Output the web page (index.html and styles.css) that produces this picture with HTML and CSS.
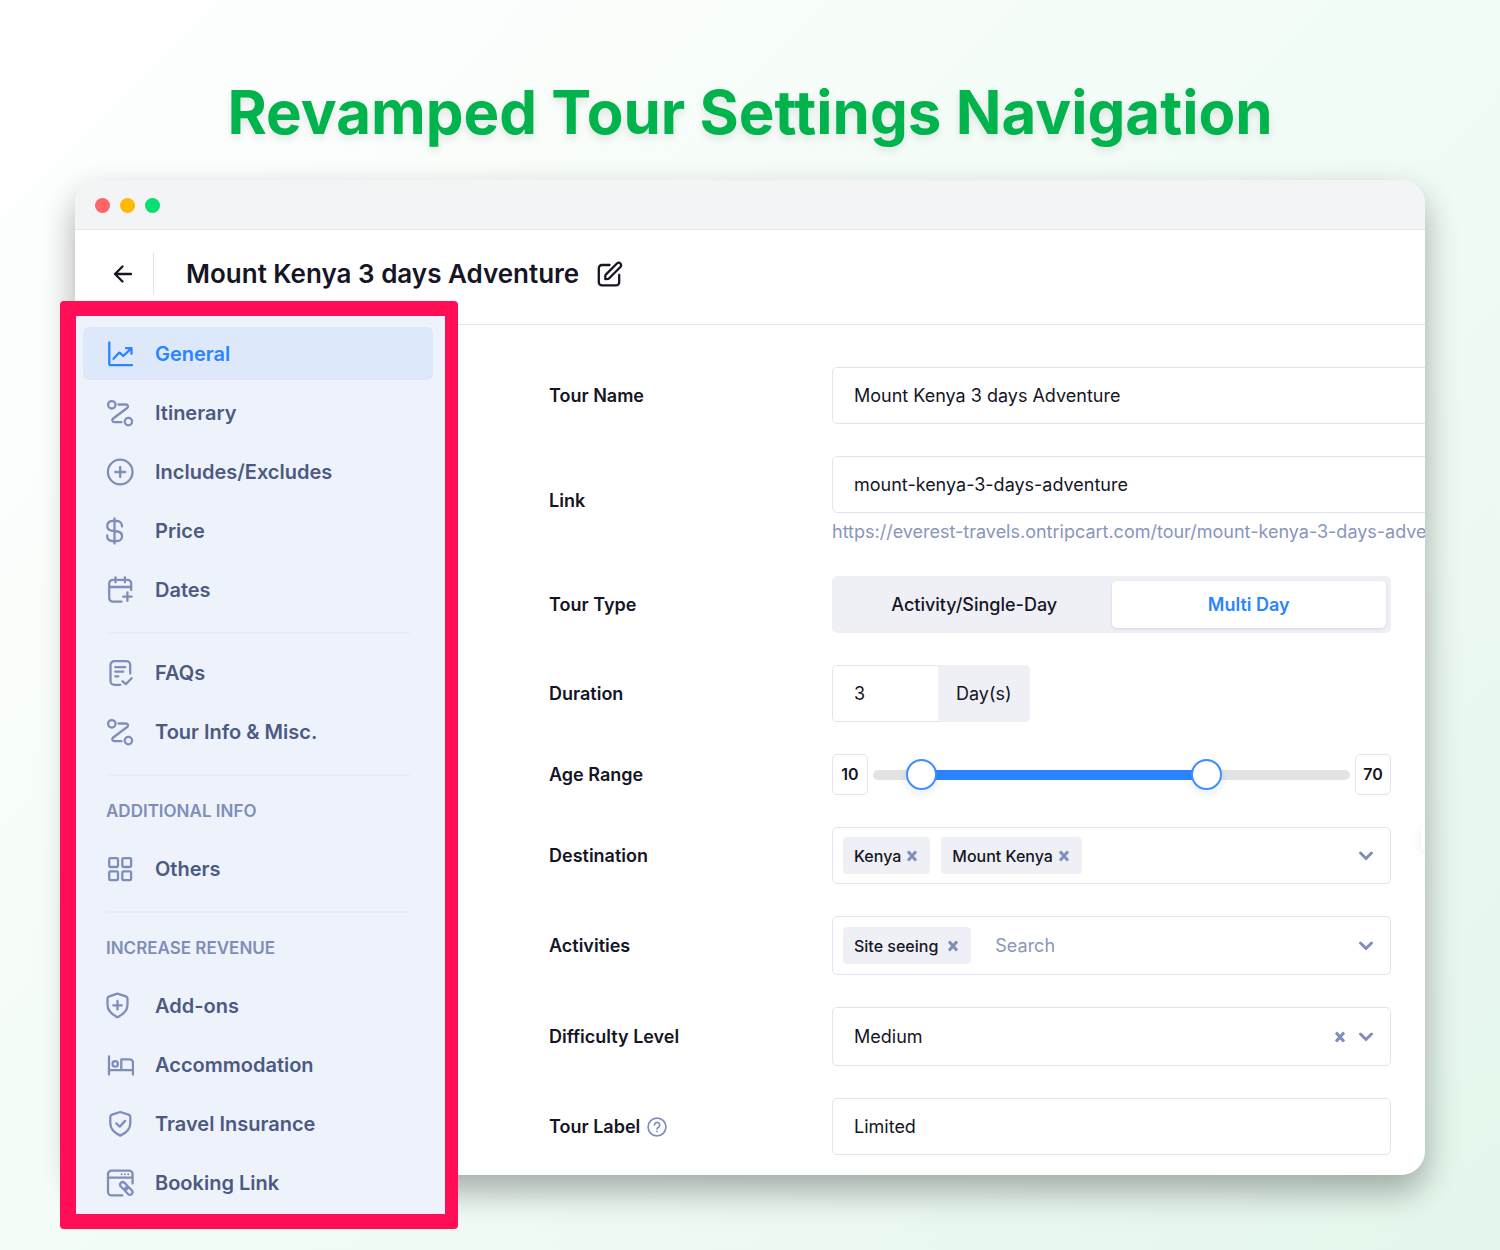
FILE: index.html
```html
<!DOCTYPE html>
<html lang="en">
<head>
<meta charset="utf-8">
<meta name="viewport" content="width=device-width, initial-scale=1">
<title>Revamped Tour Settings Navigation</title>
<link rel="stylesheet" href="styles.css">
</head>
<body>
<main class="page">
  <h1 class="headline">Revamped Tour Settings Navigation</h1>

  <section class="window">
    <div class="titlebar">
      <span class="dot dot-red"></span>
      <span class="dot dot-yellow"></span>
      <span class="dot dot-green"></span>
    </div>

    <header class="tour-header">
      <button class="back" type="button" aria-label="Back">
        <svg class="icon" viewBox="0 0 28 28"><path d="M22 14H6.500M13.500 6.500L6 14l7.500 7.500"/></svg>
      </button>
      <h2 class="tour-title">Mount Kenya 3 days Adventure</h2>
      <button class="edit" type="button" aria-label="Edit name">
        <svg class="icon" viewBox="0 0 28 28"><path d="M13.500 5H6a3.200 3.200 0 0 0-3.200 3.200v14A3.200 3.200 0 0 0 6 25.400h14a3.200 3.200 0 0 0 3.200-3.200V15"/><path d="M9.300 19.100v-3.400a1.500 1.500 0 0 1 .5-1.100L20.900 3.500a2.400 2.400 0 0 1 3.500 3.500L13.200 18.300a2 2 0 0 1-1.200.6z"/></svg>
      </button>
    </header>

    <div class="body">
      <nav class="sidebar" aria-label="Tour settings">
        <ul class="menu">
          <li><a class="item active" href="#general" aria-current="page"><svg class="icon" viewBox="0 0 28 28"><path d="M3.300 2.500v21.300a1.400 1.400 0 0 0 1.400 1.400H26"/><path d="M7.500 18.800l5.300-5.900a.8.800 0 0 1 1.100 0l2.800 2.600a.8.800 0 0 0 1.100 0L25 8.600M20 8.200h5.500v5.600"/></svg>General</a></li>
          <li><a class="item" href="#itinerary"><svg class="icon" viewBox="0 0 28 28"><circle cx="5.800" cy="5.800" r="3.700"/><circle cx="22.400" cy="22.600" r="3.700"/><path d="M12.500 5.500h7.300c2.200 0 3 2.200 1.400 3.500L7.200 19.500c-1.800 1.400-.8 3.700 1.300 3.700h7"/></svg>Itinerary</a></li>
          <li><a class="item" href="#includes"><svg class="icon" viewBox="0 0 28 28"><circle cx="14.200" cy="14" r="12.300"/><path d="M14.200 9v10M9.200 14h10"/></svg>Includes/Excludes</a></li>
          <li><a class="item" href="#price"><svg class="icon" viewBox="0 0 28 28"><path d="M8.500 1.500v25M16 9.500V9a5 5 0 0 0-5-5H6a4.800 4.800 0 0 0-4.800 4.800C1.200 11.500 3 13.300 5.500 13.600l6.200.9c2.600.4 4.300 2.200 4.300 4.700A4.800 4.800 0 0 1 11.200 24H6a4.800 4.800 0 0 1-4.800-4.800v-.7"/></svg>Price</a></li>
          <li><a class="item" href="#dates"><svg class="icon" viewBox="0 0 28 28"><path d="M25.200 14V7.500A3.700 3.700 0 0 0 21.500 3.800H7A3.700 3.700 0 0 0 3.200 7.500V22A3.700 3.700 0 0 0 7 25.700h8.500M3.200 11h22M9.500 1.300v5M18.900 1.300v5M21.400 16.300v8.600M17.100 20.600h8.600"/></svg>Dates</a></li>
        </ul>
        <ul class="menu">
          <li><a class="item" href="#faqs"><svg class="icon" viewBox="0 0 28 28"><path d="M24.200 14.500V6a3.800 3.800 0 0 0-3.800-3.800H8.300A3.800 3.800 0 0 0 4.500 6v16a3.800 3.800 0 0 0 3.800 3.800h6M9.300 8.200h10M9.300 12.700h8M9.300 17.300h3M16.500 22.300l3.300 2.900 5.800-6"/></svg>FAQs</a></li>
          <li><a class="item" href="#misc"><svg class="icon" viewBox="0 0 28 28"><circle cx="5.800" cy="5.800" r="3.700"/><circle cx="22.400" cy="22.600" r="3.700"/><path d="M12.500 5.500h7.300c2.200 0 3 2.200 1.400 3.500L7.200 19.500c-1.800 1.400-.8 3.700 1.300 3.700h7"/></svg>Tour Info &amp; Misc.</a></li>
        </ul>
        <h3 class="group">ADDITIONAL INFO</h3>
        <ul class="menu">
          <li><a class="item" href="#others"><svg class="icon" viewBox="0 0 28 28"><rect x="3.200" y="3.200" width="8.800" height="8.800" rx="1.200"/><rect x="16.300" y="3.200" width="8.800" height="8.800" rx="1.200"/><rect x="3.200" y="16.300" width="8.800" height="8.800" rx="1.200"/><rect x="16.300" y="16.300" width="8.800" height="8.800" rx="1.200"/></svg>Others</a></li>
        </ul>
        <h3 class="group">INCREASE REVENUE</h3>
        <ul class="menu">
          <li><a class="item" href="#addons"><svg class="icon" viewBox="0 0 28 28"><path d="M11.500 1.600l8.300 2.700q1.700.6 1.700 2.300v6.200c0 6-4.500 9.800-10 12.400C6 22.600 1.500 18.800 1.500 12.800V6.600q0-1.700 1.700-2.300zM11.500 9v8.600M7.200 13.300h8.600"/></svg>Add-ons</a></li>
          <li><a class="item" href="#accommodation"><svg class="icon" viewBox="0 0 28 28"><path d="M3 5.500v18M3 19.200h24M27 23.500V11.800a3.400 3.400 0 0 0-3.400-3.400h-8.300v10.800"/><circle cx="9.200" cy="12.900" r="2.700"/></svg>Accommodation</a></li>
          <li><a class="item" href="#insurance"><svg class="icon" viewBox="0 0 28 28"><path d="M14.300 2l8.300 2.700q1.700.6 1.700 2.300v6.200c0 6-4.500 9.800-10 12.400C8.800 23 4.300 19.200 4.300 13.200V7q0-1.700 1.700-2.300zM10.300 13.400l3.500 3.200 5.300-5.700"/></svg>Travel Insurance</a></li>
          <li><a class="item" href="#booking"><svg class="icon" viewBox="0 0 28 28"><path d="M26.600 14.500V5.300A3.700 3.700 0 0 0 22.900 1.600H5.700A3.700 3.700 0 0 0 2 5.300v17.400a3.700 3.700 0 0 0 3.700 3.700h10.600M2 8.600h24.600"/><g class="spots"><circle cx="15.700" cy="5.300" r="1"/><circle cx="19" cy="5.300" r="1"/><circle cx="22.300" cy="5.300" r="1"/></g><rect x="-4.300" y="-2.600" width="8.600" height="5.200" rx="2.600" transform="translate(17.900 16.900) rotate(45)"/><rect x="-4.300" y="-2.600" width="8.600" height="5.200" rx="2.600" transform="translate(22.700 21.900) rotate(45)"/></svg>Booking Link</a></li>
        </ul>
      </nav>

      <form class="form">
        <label class="label" for="name">Tour Name</label>
        <input class="box wide" id="name" type="text" value="Mount Kenya 3 days Adventure">

        <label class="label" for="link">Link</label>
        <div class="link-field">
          <input class="box wide" id="link" type="text" value="mount-kenya-3-days-adventure">
          <p class="help">https://everest-travels.ontripcart.com/tour/mount-kenya-3-days-adventure</p>
        </div>

        <span class="label" id="type-label">Tour Type</span>
        <div class="segment" role="radiogroup" aria-labelledby="type-label">
          <label class="choice"><input type="radio" name="type">Activity/Single-Day</label>
          <label class="choice"><input type="radio" name="type" checked>Multi Day</label>
        </div>

        <label class="label" for="duration">Duration</label>
        <div class="duration">
          <input class="box days" id="duration" type="text" value="3">
          <span class="unit">Day(s)</span>
        </div>

        <span class="label">Age Range</span>
        <div class="range">
          <output class="bound">10</output>
          <div class="track">
            <div class="fill" style="left: 10%; width: 60%"></div>
            <input class="thumb" type="range" min="0" max="100" value="10" aria-label="Minimum age">
            <input class="thumb" type="range" min="0" max="100" value="70" aria-label="Maximum age">
          </div>
          <output class="bound">70</output>
        </div>

        <span class="label">Destination</span>
        <div class="box multi">
          <span class="chip">Kenya<button type="button" aria-label="Remove Kenya"><svg class="mark" viewBox="0 0 12 12"><path d="M2 1.500l8 9M10 1.500l-8 9"/></svg></button></span>
          <span class="chip">Mount Kenya<button type="button" aria-label="Remove Mount Kenya"><svg class="mark" viewBox="0 0 12 12"><path d="M2 1.500l8 9M10 1.500l-8 9"/></svg></button></span>
          <button class="open" type="button" aria-label="Open destinations"><svg class="chevron" viewBox="0 0 16 16"><path d="M2.500 5L8 10.500 13.500 5"/></svg></button>
        </div>

        <label class="label" for="activities">Activities</label>
        <div class="box multi tall">
          <span class="chip roomy">Site seeing<button type="button" aria-label="Remove Site seeing"><svg class="mark" viewBox="0 0 12 12"><path d="M2 1.500l8 9M10 1.500l-8 9"/></svg></button></span>
          <input class="search" id="activities" type="text" placeholder="Search">
          <button class="open" type="button" aria-label="Open activities"><svg class="chevron" viewBox="0 0 16 16"><path d="M2.500 5L8 10.500 13.500 5"/></svg></button>
        </div>

        <label class="label" for="difficulty">Difficulty Level</label>
        <div class="box multi tall">
          <select class="level" id="difficulty"><option>Medium</option></select>
          <button class="clear" type="button" aria-label="Clear"><svg class="mark" viewBox="0 0 12 12"><path d="M2 1.500l8 9M10 1.500l-8 9"/></svg></button>
          <span class="open"><svg class="chevron" viewBox="0 0 16 16"><path d="M2.500 5L8 10.500 13.500 5"/></svg></span>
        </div>

        <label class="label" for="tour-label">Tour Label
          <svg class="hint" viewBox="0 0 20 20"><circle cx="10" cy="10" r="8.900"/><path d="M7.500 8a2.600 2.600 0 1 1 3.900 2.300c-.9.500-1.300 1-1.300 1.700M10 14.300v.2"/></svg>
        </label>
        <input class="box" id="tour-label" type="text" value="Limited">

        <button class="float-tab" type="button" aria-label="Open panel"></button>
      </form>
    </div>
  </section>
</main>
</body>
</html>
```
FILE: styles.css
```css
* {
  box-sizing: border-box;
}

body {
  margin: 0;
  min-height: 100vh;
  background: linear-gradient(135deg, #ffffff 0%, #f2fcf6 50%, #e4f6eb 100%);
  color: #151525;
  font-family: Inter, "Liberation Sans", sans-serif;
  font-size: 18px;
}

button,
input,
select {
  margin: 0;
  padding: 0;
  border: 0;
  background: none;
  color: inherit;
  font: inherit;
}

.page {
  padding: 76px 75px;
}

.headline {
  margin: 0 0 32px;
  color: #00b34d;
  font-size: 60px;
  font-weight: 700;
  line-height: 72px;
  text-align: center;
  text-shadow: 0 4px 8px rgba(0, 0, 0, 0.1);
}

.window {
  border-radius: 24px;
  background: #ffffff;
  box-shadow: 0 16px 34px rgba(0, 0, 0, 0.32);
}

.titlebar {
  display: flex;
  align-items: center;
  gap: 10px;
  height: 50px;
  padding: 1px 20px 0;
  border-bottom: 1px solid #e3e5e8;
  border-radius: 24px 24px 0 0;
  background: #f2f4f6;
}

.dot {
  width: 15px;
  height: 15px;
  border-radius: 50%;
}

.dot-red { background: #ff6467; }
.dot-yellow { background: #ffb900; }
.dot-green { background: #05df72; }

.tour-header {
  display: flex;
  align-items: center;
  height: 95px;
  padding: 0 34px 6px;
  border-bottom: 1px solid #e2e3ef;
}

.icon {
  display: block;
  flex: none;
  width: 28px;
  height: 28px;
  fill: none;
  stroke: currentColor;
  stroke-width: 2.3;
  stroke-linecap: round;
  stroke-linejoin: round;
}

.spots {
  fill: currentColor;
  stroke: none;
}

.back {
  height: 42px;
  padding-right: 16px;
  border-right: 1px solid #e2e3ef;
}

.tour-title {
  margin: 0 17px 0 32px;
  font-size: 26px;
  font-weight: 600;
  line-height: 32px;
}

.body {
  display: flex;
}

.sidebar {
  flex: none;
  width: 398px;
  margin: -24px 0 -54px -15px;
  padding: 11px 12px 0 7px;
  border: solid #ff0d57;
  border-width: 15px 13px 15px 16px;
  border-radius: 4px;
  background: #eef3fb;
}

.menu {
  display: flex;
  flex-direction: column;
  gap: 6px;
  margin: 0;
  padding: 0;
  list-style: none;
}

.menu + .menu::before,
.group::before {
  content: "";
  display: block;
  height: 2px;
  background: #e4eefb;
}

.menu + .menu::before {
  margin: 16px 23px 6px;
}

.item {
  display: flex;
  align-items: center;
  gap: 21px;
  height: 53px;
  padding-left: 23px;
  border-radius: 6px;
  color: #4c5a82;
  font-size: 20px;
  font-weight: 600;
  text-decoration: none;
}

.item .icon {
  color: #7f8eb8;
}

.item.active,
.item.active .icon {
  color: #2b84ff;
}

.item.active {
  background: #dde9fb;
}

.group {
  margin: 0;
  padding: 16px 23px 9px;
  color: #7f8eb8;
  font-size: 17px;
  font-weight: 600;
  line-height: 44px;
}

.group::before {
  margin-bottom: 13px;
}

.form {
  position: relative;
  display: grid;
  flex: 1;
  grid-template-columns: 283px minmax(0, 1fr);
  align-items: center;
  row-gap: 32px;
  min-width: 0;
  padding: 42px 34px 20px 91px;
  border-radius: 0 0 24px 0;
  overflow: hidden;
}

.label {
  display: flex;
  align-items: center;
  gap: 7px;
  font-weight: 600;
}

.hint {
  width: 20px;
  height: 20px;
  fill: none;
  stroke: #7f8eb8;
  stroke-width: 1.7;
  stroke-linecap: round;
}

.box {
  width: 100%;
  height: 57px;
  padding: 0 21px;
  border: 1px solid #e1e3f0;
  border-radius: 5px;
  background: #ffffff;
}

.wide {
  display: block;
  width: calc(100% + 100px);
}

.tall {
  height: 59px;
}

.help {
  margin: 0;
  padding-top: 6px;
  color: #8896bc;
  line-height: 25px;
  white-space: nowrap;
}

.segment {
  display: grid;
  grid-template-columns: 1fr 1fr;
  height: 57px;
  padding: 5px;
  border-radius: 5px;
  background: #eff0f5;
}

.choice {
  display: flex;
  align-items: center;
  justify-content: center;
  border-radius: 5px;
  font-weight: 500;
}

.choice input {
  position: absolute;
  opacity: 0;
}

.choice:has(:checked) {
  background: #ffffff;
  box-shadow: 0 1px 3px rgba(30, 40, 80, 0.12);
  color: #2b84ff;
  font-weight: 600;
}

.duration {
  display: flex;
}

.days {
  width: 106px;
  border-right: 0;
  border-radius: 5px 0 0 5px;
}

.unit {
  padding: 0 18px;
  border-radius: 0 5px 5px 0;
  background: #eff0f5;
  line-height: 57px;
}

.range {
  display: flex;
  align-items: center;
  justify-content: space-between;
  gap: 5px;
}

.bound {
  width: 36px;
  height: 41px;
  border: 1px solid #e1e3f0;
  border-radius: 5px;
  font-size: 16px;
  font-weight: 600;
  line-height: 39px;
  text-align: center;
}

.track {
  position: relative;
  flex: 1;
  height: 10px;
  border-radius: 5px;
  background: #e3e3e3;
}

.fill {
  position: absolute;
  top: 0;
  height: 10px;
  background: #2b84ff;
}

.thumb {
  position: absolute;
  top: -11px;
  left: -15px;
  width: calc(100% + 30px);
  height: 31px;
  appearance: none;
  pointer-events: none;
}

.thumb::-webkit-slider-thumb {
  width: 31px;
  height: 31px;
  border: 2px solid #3d8eff;
  border-radius: 50%;
  background: #ffffff;
  box-shadow: 0 4px 8px rgba(0, 0, 0, 0.08);
  appearance: none;
  pointer-events: auto;
}

.multi {
  display: flex;
  align-items: center;
  padding: 0 16px 0 10px;
}

.chip {
  display: flex;
  align-items: center;
  gap: 5px;
  height: 37px;
  margin-right: 11px;
  padding: 0 12px 0 11px;
  border-radius: 4px;
  background: #eff0f5;
  font-size: 16px;
  font-weight: 500;
}

.roomy {
  gap: 9px;
}

.mark,
.chevron {
  display: block;
  width: 12px;
  height: 12px;
  fill: none;
  stroke: #7f8eb8;
  stroke-width: 3;
}

.chevron {
  width: 16px;
  height: 16px;
  stroke-linecap: round;
}

.open {
  margin-left: auto;
}

.search {
  flex: 1;
  min-width: 0;
  padding-left: 13px;
}

.search::placeholder {
  color: #8896bc;
  opacity: 1;
}

.level {
  flex: 1;
  padding-left: 11px;
  appearance: none;
}

.clear {
  margin-right: 12px;
}

.float-tab {
  position: absolute;
  top: 500px;
  right: -26px;
  width: 30px;
  height: 25px;
  border-radius: 4px;
  background: #ffffff;
  box-shadow: 0 2px 10px rgba(0, 0, 0, 0.08);
}
```
